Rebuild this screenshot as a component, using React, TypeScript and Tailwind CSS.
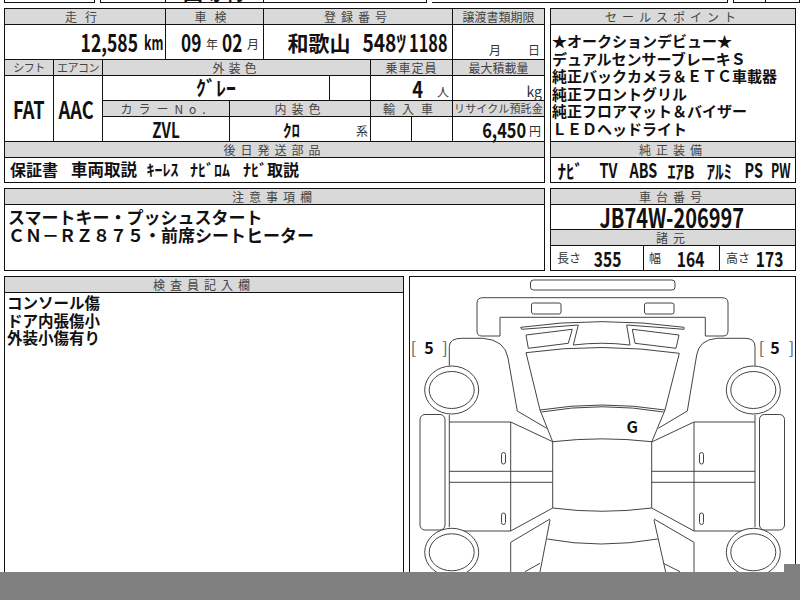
import type { ReactNode } from "react";
import clsx from "clsx";

function Head({ className, children }: { className?: string; children?: ReactNode }) {
  return (
    <div
      className={clsx(
        "flex items-center justify-center overflow-hidden whitespace-nowrap border-r border-b border-[#111] bg-[#d9d9d9] text-[12px] leading-none text-[#444]",
        className
      )}
    >
      {children}
    </div>
  );
}

function Cell({ className, children }: { className?: string; children?: ReactNode }) {
  return <div className={clsx("flex items-center border-r border-b border-[#111] bg-white", className)}>{children}</div>;
}

// condensed bold value, centered in a slot of fixed width
function Slot({ w, size, scale, className, children }: { w: string; size: string; scale: string; className?: string; children: ReactNode }) {
  return (
    <span className={clsx("flex shrink-0 justify-center", w, className)}>
      <span className={clsx("whitespace-nowrap font-bold leading-none text-[#111]", size, scale)}>{children}</span>
    </span>
  );
}

function Small({ className, children }: { className?: string; children: ReactNode }) {
  return <span className={clsx("shrink-0 whitespace-nowrap text-[12px] leading-none text-[#333]", className)}>{children}</span>;
}

function CarDiagram() {
  return (
    <svg className="block" width="385" height="295" viewBox="410 277 385 295" fill="none" stroke="#444" strokeWidth="1">
      <rect x="530.5" y="280" width="144.5" height="10" rx="3" />
      <rect x="531.5" y="303" width="29.5" height="11" rx="2" />
      <rect x="644.5" y="303" width="29.5" height="11" rx="2" />
      <path d="M481.7 336H500V317.3H705.3V336H723Q728 336 728 331V303Q728 297.7 722 297.7H483Q477 297.7 477 303V331Q477 336 481.7 336Z" />
      <path d="M520.7 327.3Q601.7 316 684 327.3L684 329.3L626.7 325L630 345Q601.7 341.5 573.3 345L578.3 325L521.7 329.3Z" />
      <path d="M526 335L572.3 329.3L568.3 343.3L528.3 348.3Z" />
      <path d="M632.3 329.3L679 335L676 348.3L635 343.3Z" />
      <path d="M526 352.7Q601.7 342 679.3 353.3L665 410Q601.7 400 540 410Z" />
      <path d="M541.5 412Q601.7 401.5 663.5 412" />
      <path d="M540 410L552.7 441.7M665 410L651.7 442" />
      <path d="M552.7 441.7Q602 436 651.7 441.7V508Q602 514.5 552.7 508Z" />
      <path d="M547.3 539Q600 549 657.7 539" />
      <path d="M550 520L540 572M654 520L665.7 572" />
      <path d="M449.3 365.7V346.7Q449.3 338.3 461.7 338.3H483Q505 340 508 358L517.3 411L546.7 428.3" />
      <path d="M755 365.7V346.7Q755 338.3 745 338.3H716.7Q699 340 696.7 355L687.3 411L658.3 428.3" />
      <path d="M449.3 415V527.3M755 415V527.3" />
      <path d="M449.3 422H510.7L552.7 441.7M449.3 531H510.7L552.7 508M510.7 422V531" />
      <path d="M449.3 471.3H552.7M449.3 482.3H552.7M651.7 471.3H755M651.7 482.3H755" />
      <path d="M755 422H694L651.7 442M755 531H694L651.7 508M694 422V531" />
      <path d="M510.7 572V542.3L550 519M694 572V542.3L654 519" />
      <path d="M525 571.7L540 563.3M663.3 563.3L680 571.7" />
      <rect x="420" y="414.5" width="25" height="115.5" rx="5" />
      <rect x="759.5" y="414.5" width="25" height="115.5" rx="5" />
      <rect x="501.5" y="452.5" width="4" height="11.5" rx="2" />
      <rect x="501.5" y="513" width="4" height="11.5" rx="2" />
      <rect x="699.5" y="452.5" width="4" height="11.5" rx="2" />
      <rect x="699.5" y="513" width="4" height="11.5" rx="2" />
      <ellipse cx="451.7" cy="390" rx="27" ry="24" fill="#fff" />
      <ellipse cx="451.7" cy="390" rx="22.5" ry="18.5" />
      <ellipse cx="753.3" cy="390" rx="27" ry="24" fill="#fff" />
      <ellipse cx="753.3" cy="390" rx="22.5" ry="18.5" />
      <ellipse cx="451.7" cy="552.3" rx="27" ry="24" fill="#fff" />
      <ellipse cx="451.7" cy="552.3" rx="22.5" ry="18.5" />
      <ellipse cx="753.3" cy="552.3" rx="27" ry="24" fill="#fff" />
      <ellipse cx="753.3" cy="552.3" rx="22.5" ry="18.5" />
      <g stroke="none" textAnchor="middle" fontSize="16">
        <text x="413.5" y="354" fill="#555">[</text>
        <text x="429" y="354" fill="#111" fontWeight="700">5</text>
        <text x="445" y="354" fill="#555">]</text>
        <text x="761.5" y="354" fill="#555">[</text>
        <text x="775" y="354" fill="#111" fontWeight="700">5</text>
        <text x="791.5" y="354" fill="#555">]</text>
        <text x="632.3" y="432.5" fill="#111" fontWeight="700">G</text>
      </g>
    </svg>
  );
}

export default function App() {
  return (
    <div className="relative flex h-[600px] w-[800px] flex-col overflow-hidden bg-white font-['Noto_Sans_CJK_JP',sans-serif] text-[#111]">
      {/* previous sheet, cut off at the top */}
      <div className="flex h-[3px] gap-[5px] pl-[4px]">
        <div className="w-[91px] border-x border-b border-[#111]" />
        <div className="flex w-[328px] overflow-hidden border-x border-b border-[#111]">
          <div className="w-[65px] border-r border-[#111]" />
          <div className="flex w-[98px] items-end justify-center overflow-hidden border-r border-[#111] text-[20px] font-bold leading-none">
            <span className="whitespace-nowrap tracking-[1px]">国等特</span>
          </div>
        </div>
        <div className="w-[296px] border-r border-b border-[#111]" />
        <div className="flex w-[67px] border-x border-b border-[#111]">
          <div className="w-[32px] border-r border-[#111]" />
        </div>
      </div>

      {/* vehicle data + sales points */}
      <div className="mt-[5px] flex gap-[5px] pl-[4px]">
        <div className="grid w-[541px] grid-cols-[49px_49px_63px_64px_34px_66px_41px_41px_41px_92px] grid-rows-[16px_35px_16px_25px_16px_25px_16px_25px] border-l border-t border-[#111]">
          <Head className="col-span-3 tracking-[8px]">走行</Head>
          <Head className="col-span-2 tracking-[8px]">車検</Head>
          <Head className="col-span-4 tracking-[5px]">登録番号</Head>
          <Head>譲渡書類期限</Head>

          <Cell className="col-span-3 pl-[76px]">
            <Slot w="w-[57px]" size="text-[24px]" scale="scale-x-[.73]">12,585</Slot>
            <Slot w="w-[17px]" size="text-[20px]" scale="scale-x-[.62]" className="ml-[7px]">km</Slot>
          </Cell>
          <Cell className="col-span-2 pl-[15px]">
            <Slot w="w-[20px]" size="text-[24px]" scale="scale-x-[.72]">09</Slot>
            <Small className="ml-[5px] mt-[4px] w-[11px]">年</Small>
            <Slot w="w-[20px]" size="text-[24px]" scale="scale-x-[.72]" className="ml-[5px]">02</Slot>
            <Small className="ml-[5px] mt-[4px] w-[10px]">月</Small>
          </Cell>
          <Cell className="col-span-4 pl-[24px]">
            <Slot w="w-[62px]" size="text-[21px]" scale="scale-x-100">和歌山</Slot>
            <Slot w="w-[45px]" size="text-[24px]" scale="scale-x-[.8]" className="ml-[12px]">548ﾂ</Slot>
            <Slot w="w-[38px]" size="text-[24px]" scale="scale-x-[.68]" className="ml-[2px]">1188</Slot>
          </Cell>
          <Cell className="pl-[36px] pt-[16px]">
            <Small className="w-[39px]">月</Small>
            <Small>日</Small>
          </Cell>

          <Head className="text-[11px]! tracking-[-.5px]">シフト</Head>
          <Head className="text-[11px]! tracking-[-.5px]">エアコン</Head>
          <Head className="col-span-5 tracking-[4px]">外装色</Head>
          <Head className="col-span-2 tracking-[1px]">乗車定員</Head>
          <Head>最大積載量</Head>

          <Cell className="row-span-3 justify-center">
            <Slot w="w-[32px]" size="text-[24px]" scale="scale-x-[.76]">FAT</Slot>
          </Cell>
          <Cell className="row-span-3 justify-center pr-[3px]">
            <Slot w="w-[33px]" size="text-[24px]" scale="scale-x-[.76]">AAC</Slot>
          </Cell>
          <Cell className="col-span-4 justify-center">
            <Slot w="w-[41px]" size="text-[20px]" scale="scale-x-100">ｸﾞﾚｰ</Slot>
          </Cell>
          <Cell />
          <Cell className="col-span-2 pl-[42px]">
            <Slot w="w-[9px]" size="text-[23px]" scale="scale-x-[.8]">4</Slot>
            <Small className="ml-[15px] mt-[8px]">人</Small>
          </Cell>
          <Cell className="items-end justify-end pb-[2px] pr-[2px]">
            <Small className="text-[14px]!">kg</Small>
          </Cell>

          <Head className="col-span-2 tracking-[6px]">カラーNo.</Head>
          <Head className="col-span-3 tracking-[5px]">内装色</Head>
          <Head className="col-span-2 tracking-[7px]">輸入車</Head>
          <Head className="text-[11px]! tracking-[.2px]">リサイクル預託金</Head>

          <Cell className="col-span-2 justify-center">
            <Slot w="w-[27px]" size="text-[21px]" scale="scale-x-[.72]">ZVL</Slot>
          </Cell>
          <Cell className="col-span-3 pl-[53px]">
            <Slot w="w-[17px]" size="text-[17px]" scale="scale-x-100">ｸﾛ</Slot>
            <Small className="ml-[56px] mt-[4px]">系</Small>
          </Cell>
          <Cell />
          <Cell />
          <Cell className="pl-[29px]">
            <Slot w="w-[44px]" size="text-[21px]" scale="scale-x-[.78]">6,450</Slot>
            <Small className="ml-[3px] mt-[3px]">円</Small>
          </Cell>

          <Head className="col-span-10 tracking-[5px]">後日発送部品</Head>
          <Cell className="col-span-10 pl-[5px] pb-[2px]">
            <Slot w="w-[48px]" size="text-[16px]" scale="scale-x-100">保証書</Slot>
            <Slot w="w-[66px]" size="text-[16.5px]" scale="scale-x-100" className="ml-[13px]">車両取説</Slot>
            <Slot w="w-[31px]" size="text-[16px]" scale="scale-x-100" className="ml-[10px]">ｷｰﾚｽ</Slot>
            <Slot w="w-[40px]" size="text-[16px]" scale="scale-x-100" className="ml-[12px]">ﾅﾋﾞﾛﾑ</Slot>
            <Slot w="w-[24px]" size="text-[16px]" scale="scale-x-100" className="ml-[13px]">ﾅﾋﾞ</Slot>
            <Slot w="w-[32px]" size="text-[16px]" scale="scale-x-100">取説</Slot>
          </Cell>
        </div>

        <div className="grid w-[246px] grid-rows-[16px_117px_16px_25px] border-l border-t border-[#111]">
          <Head className="tracking-[5px]">セールスポイント</Head>
          <div className="border-r border-b border-[#111] pl-px pt-[7px] text-[15px] font-bold leading-[17.6px]">
            <div>★オークションデビュー★</div>
            <div>デュアルセンサーブレーキＳ</div>
            <div>純正バックカメラ＆ＥＴＣ車載器</div>
            <div>純正フロントグリル</div>
            <div>純正フロアマット＆バイザー</div>
            <div>ＬＥＤヘッドライト</div>
          </div>
          <Head className="tracking-[5px]">純正装備</Head>
          <Cell className="pl-[9px]">
            <Slot w="w-[20px]" size="text-[19px]" scale="scale-x-[.9]">ﾅﾋﾞ</Slot>
            <Slot w="w-[17px]" size="text-[20px]" scale="scale-x-[.72]" className="ml-[20px]">TV</Slot>
            <Slot w="w-[27px]" size="text-[20px]" scale="scale-x-[.72]" className="ml-[13px]">ABS</Slot>
            <Slot w="w-[28px]" size="text-[19px]" scale="scale-x-[.85]" className="ml-[10px]">ｴｱB</Slot>
            <Slot w="w-[28px]" size="text-[19px]" scale="scale-x-[.9]" className="ml-[10px]">ｱﾙﾐ</Slot>
            <Slot w="w-[17px]" size="text-[20px]" scale="scale-x-[.72]" className="ml-[12px]">PS</Slot>
            <Slot w="w-[17px]" size="text-[20px]" scale="scale-x-[.62]" className="ml-[10px]">PW</Slot>
          </Cell>
        </div>
      </div>

      {/* notes + chassis number */}
      <div className="mt-[5px] flex gap-[5px] pl-[4px]">
        <div className="grid w-[541px] grid-rows-[16px_66px] border-l border-t border-[#111]">
          <Head className="tracking-[5px]">注意事項欄</Head>
          <div className="border-r border-b border-[#111] pl-[3px] pt-[3px] text-[17px] font-bold leading-[18px]">
            <div>スマートキー・プッシュスタート</div>
            <div>ＣＮ－ＲＺ８７５・前席シートヒーター</div>
          </div>
        </div>
        <div className="grid w-[246px] grid-cols-[93px_76px_76px] grid-rows-[16px_25px_16px_25px] border-l border-t border-[#111]">
          <Head className="col-span-3 tracking-[5px]">車台番号</Head>
          <Cell className="col-span-3 justify-center pr-[2px]">
            <Slot w="w-[143px]" size="text-[27px] leading-[24px]!" scale="scale-x-[.74]">JB74W-206997</Slot>
          </Cell>
          <Head className="col-span-3 tracking-[5px]">諸元</Head>
          <Cell className="pl-[6px]">
            <Small>長さ</Small>
            <Slot w="w-[27px]" size="text-[21px]" scale="scale-x-[.74]" className="ml-[13px]">355</Slot>
          </Cell>
          <Cell className="pl-[5px]">
            <Small>幅</Small>
            <Slot w="w-[27px]" size="text-[21px]" scale="scale-x-[.74]" className="ml-[16px]">164</Slot>
          </Cell>
          <Cell className="pl-[6px]">
            <Small>高さ</Small>
            <Slot w="w-[26px]" size="text-[21px]" scale="scale-x-[.74]" className="ml-[7px]">173</Slot>
          </Cell>
        </div>
      </div>

      {/* inspector remarks + damage map */}
      <div className="mt-[5px] flex h-[296px] gap-[5px] pl-[4px]">
        <div className="flex w-[400px] flex-col border-x border-t border-[#111]">
          <Head className="h-[16px] border-r-0! tracking-[5px]">検査員記入欄</Head>
          <div className="pl-[2px] pt-px text-[15.5px] font-bold leading-[17.5px]">
            <div>コンソール傷</div>
            <div>ドア内張傷小</div>
            <div>外装小傷有り</div>
          </div>
        </div>
        <div className="w-[387px] border-x border-t border-[#111]">
          <CarDiagram />
        </div>
      </div>

      <div className="h-[28px] bg-[#808080]" />
      <div className="absolute bottom-[28px] right-0 h-[8px] w-[16px] bg-[#808080]" />
    </div>
  );
}
